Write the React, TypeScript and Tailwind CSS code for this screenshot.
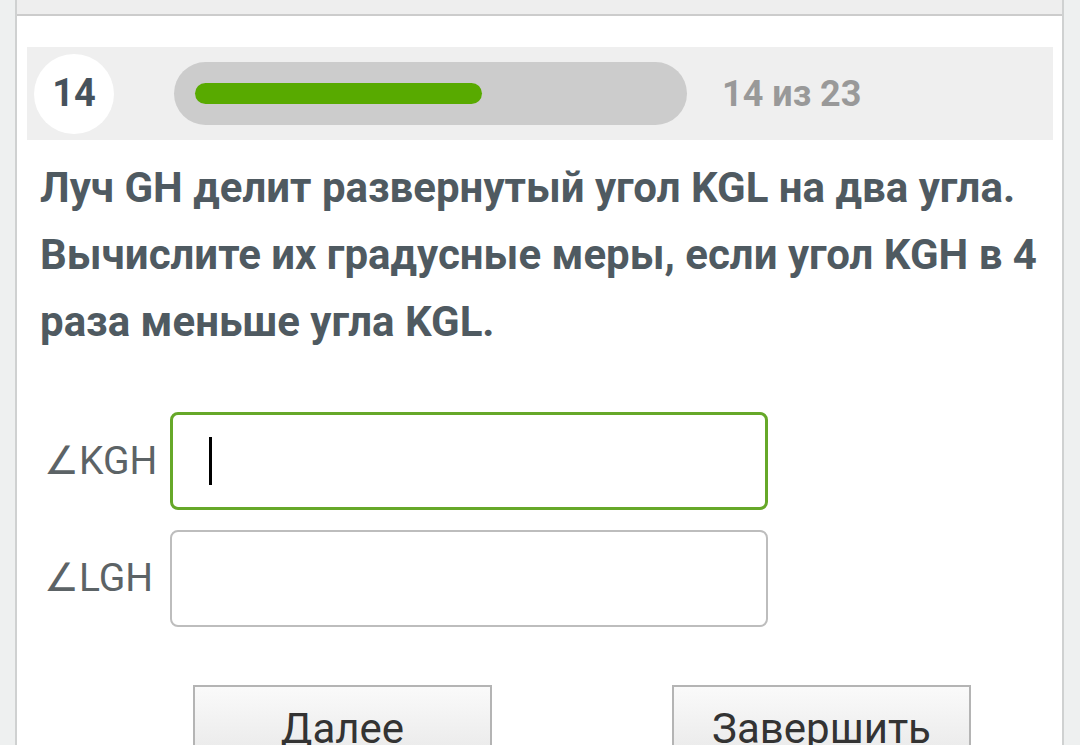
const font = { fontFamily: "Roboto, 'Noto Sans', sans-serif" };

const ProgressHeader = ({ current, total }: { current: number; total: number }) => {
  return (
    <div className="ml-[10px] mr-[9px] mt-[31px] h-[93px] bg-[#efefef] flex items-center pl-[7px]">
      <div className="w-[80px] h-[80px] shrink-0 rounded-full bg-white flex items-center justify-center text-[38px] font-bold text-[#46525c]">
        {current}
      </div>
      <div className="ml-[60px] w-[513px] h-[63px] shrink-0 rounded-full bg-[#cccccc] flex items-center px-[21px]">
        <div className="w-[287px] h-[21px] rounded-full bg-[#58aa00]" />
      </div>
      <div className="ml-[35px] text-[36px] font-bold text-[#999999]">
        {current} из {total}
      </div>
    </div>
  );
};

const AngleInput = ({ label, focused }: { label: string; focused?: boolean }) => {
  return (
    <div className="flex items-center">
      <div className="w-[153px] shrink-0 pl-[27px] text-[39px] text-[#5c6366]">{label}</div>
      <div
        className={
          focused
            ? "w-[598px] h-[98px] rounded-[8px] border-[3px] border-[#66a829] bg-white flex items-center pl-[36px]"
            : "w-[598px] h-[97px] rounded-[8px] border-2 border-[#bdbdbd] bg-white"
        }
      >
        {focused && <div className="w-[3px] h-[48px] bg-black" />}
      </div>
    </div>
  );
};

export default function App() {
  return (
    <div style={font} className="w-[1080px] h-[745px] overflow-hidden bg-[#eef0f0] flex pl-[15px] pr-[16px]">
      <div className="flex-1 h-[745px] border-x-2 border-[#cfd1d1] bg-white">
        <div className="h-[16px] bg-[#eeeeee] border-b-2 border-[#cccccc]" />
        <ProgressHeader current={14} total={23} />
        <div className="pl-[23px] pr-[8px] pt-[14px] text-[42px] leading-[67px] font-bold text-[#4f5a61]">
          Луч GH делит развернутый угол KGL на два угла. Вычислите их градусные меры, если угол KGH в 4 раза
          меньше угла KGL.
        </div>
        <div className="mt-[57px] flex flex-col gap-[20px]">
          <AngleInput label="∠KGH" focused />
          <AngleInput label="∠LGH" />
        </div>
        <div className="mt-[58px] flex pl-[176px] gap-[180px]">
          <button className="w-[299px] h-[88px] shrink-0 border-2 border-[#b4b4b4] bg-gradient-to-b from-[#fafafa] to-[#e6e6e6] text-[42px] leading-[48px] text-[#333333]">
            Далее
          </button>
          <button className="w-[299px] h-[88px] shrink-0 border-2 border-[#b4b4b4] bg-gradient-to-b from-[#fafafa] to-[#e6e6e6] text-[42px] leading-[48px] text-[#333333]">
            Завершить
          </button>
        </div>
      </div>
    </div>
  );
}
